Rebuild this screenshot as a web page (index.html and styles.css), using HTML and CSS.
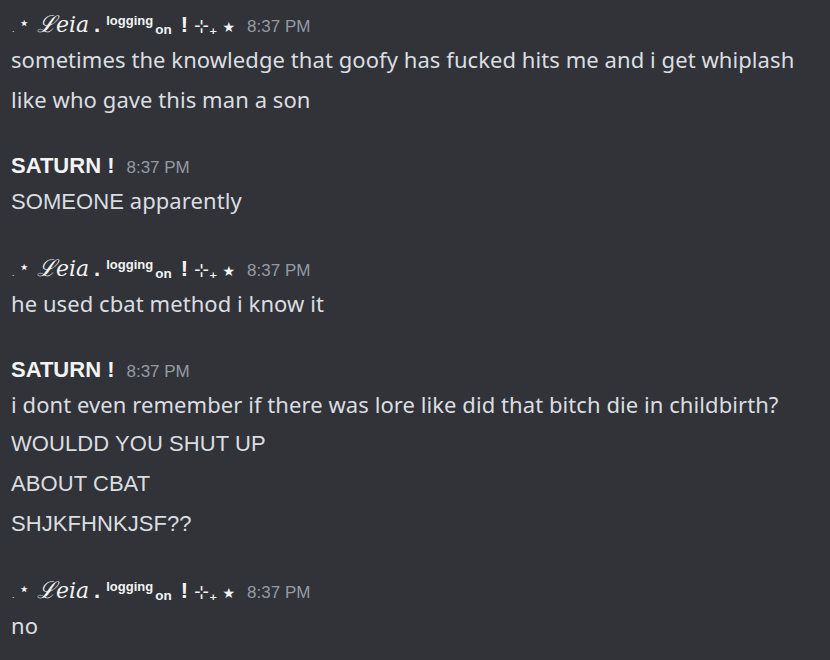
FILE: index.html
```html
<!DOCTYPE html>
<html>
<head>
<meta charset="utf-8">
<link rel="stylesheet" href="styles.css">
</head>
<body>
<div class="chat">
  <div class="group">
    <div class="header"><span class="name leia"><span class="dot">.</span><span class="tiny">⋆</span><span class="script"><span class="L">ℒ</span>𝑒𝑖𝑎</span><span class="period">.</span><span class="sup">logging</span><span class="sub">on</span><span class="bang">!</span><span class="sym">⊹</span><span class="plus">₊</span><span class="star">★</span></span><span class="time">8:37 PM</span></div>
    <div class="line">sometimes the knowledge that goofy has fucked hits me and i get whiplash</div>
    <div class="line">like who gave this man a son</div>
  </div>
  <div class="group">
    <div class="header"><span class="name caps">SATURN !</span><span class="time">8:37 PM</span></div>
    <div class="line"><span class="caps">SOMEONE</span> apparently</div>
  </div>
  <div class="group">
    <div class="header"><span class="name leia"><span class="dot">.</span><span class="tiny">⋆</span><span class="script"><span class="L">ℒ</span>𝑒𝑖𝑎</span><span class="period">.</span><span class="sup">logging</span><span class="sub">on</span><span class="bang">!</span><span class="sym">⊹</span><span class="plus">₊</span><span class="star">★</span></span><span class="time">8:37 PM</span></div>
    <div class="line">he used cbat method i know it</div>
  </div>
  <div class="group">
    <div class="header"><span class="name caps">SATURN !</span><span class="time">8:37 PM</span></div>
    <div class="line">i dont even remember if there was lore like did that bitch die in childbirth?</div>
    <div class="line caps">WOULDD YOU SHUT UP</div>
    <div class="line caps">ABOUT CBAT</div>
    <div class="line caps">SHJKFHNKJSF??</div>
  </div>
  <div class="group">
    <div class="header"><span class="name leia"><span class="dot">.</span><span class="tiny">⋆</span><span class="script"><span class="L">ℒ</span>𝑒𝑖𝑎</span><span class="period">.</span><span class="sup">logging</span><span class="sub">on</span><span class="bang">!</span><span class="sym">⊹</span><span class="plus">₊</span><span class="star">★</span></span><span class="time">8:37 PM</span></div>
    <div class="line">no</div>
  </div>
</div>
</body>
</html>
```

FILE: styles.css
```css
html, body {
  margin: 0;
  padding: 0;
  background: #313338;
}
body {
  width: 830px;
  height: 660px;
  overflow: hidden;
  font-family: "Noto Sans", "DejaVu Sans", sans-serif;
  color: #dbdee1;
}
.chat {
  padding: 11px 0 0 11px;
}
.group + .group {
  margin-top: 33px;
}
.header {
  height: 28px;
  line-height: 28px;
  white-space: nowrap;
}
.name {
  color: #f2f3f5;
  font-weight: 700;
  font-size: 22px;
}
.name.caps {
  font-family: "Liberation Sans", Arial, sans-serif;
}
.leia {
  font-family: "Liberation Sans", Arial, sans-serif;
}
.leia span {
  line-height: 0;
}
.leia .dot {
  font-size: 9px;
  font-weight: 400;
  margin-left: 1px;
}
.leia .tiny {
  font-family: "DejaVu Sans", sans-serif;
  font-size: 15px;
  vertical-align: 4px;
  margin-left: 5px;
}
.leia .script {
  font-family: "DejaVu Serif", "Liberation Serif", serif;
  font-style: italic;
  font-weight: 400;
  font-size: 22px;
  margin-left: 8px;
}
.leia .script .L {
  font-size: 23px;
}
.leia .period {
  margin-left: 5px;
}
.leia .sup {
  font-size: 13px;
  vertical-align: 7px;
  margin-left: 6px;
}
.leia .sub {
  font-size: 13.5px;
  vertical-align: -2px;
  margin-left: 2px;
}
.leia .bang {
  margin-left: 9px;
}
.leia .sym {
  font-family: "DejaVu Sans", sans-serif;
  font-weight: 400;
  font-size: 18px;
  margin-left: 6px;
}
.leia .plus {
  font-family: "DejaVu Sans", sans-serif;
  font-size: 16px;
  vertical-align: -2px;
}
.leia .star {
  font-family: "DejaVu Sans", sans-serif;
  font-weight: 400;
  font-size: 14px;
  margin-left: 5px;
}
.time {
  margin-left: 12px;
  font-family: "Liberation Sans", Arial, sans-serif;
  font-size: 17px;
  color: #949ba4;
}
.line {
  line-height: 28px;
  padding: 6px 0;
  font-size: 22px;
  letter-spacing: 0.07px;
  white-space: nowrap;
}
.caps {
  font-family: "Liberation Sans", Arial, sans-serif;
  font-size: 22px;
}
```
